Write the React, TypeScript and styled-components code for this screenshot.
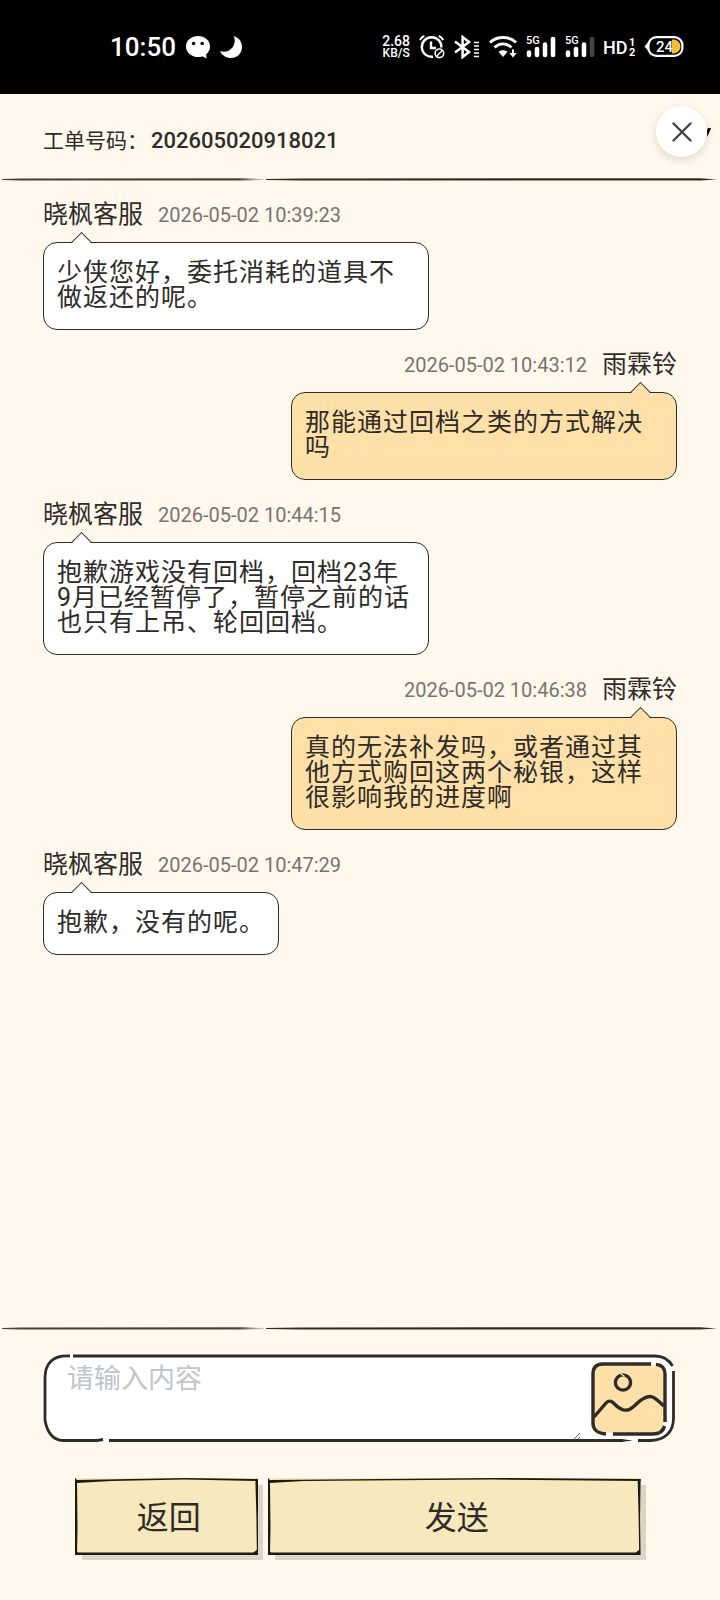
import React from 'react';
import styled, { createGlobalStyle } from 'styled-components';

const GlobalStyle = createGlobalStyle`
  * { box-sizing: border-box; }
  body {
    margin: 0;
    background: #fff8ec;
    color: #2e2c29;
    font-family: Roboto, 'Noto Sans CJK SC', sans-serif;
  }
  button, textarea { font-family: inherit; color: inherit; }
`;

const Page = styled.div`
  display: flex;
  flex-direction: column;
  min-height: 100vh;
`;

const StatusBar = styled.div`
  display: flex;
  align-items: center;
  justify-content: space-between;
  height: 94px;
  padding: 0 36px 0 110px;
  background: #000;
  color: #fff;
`;

const StatusGroup = styled.div<{ $gap: number }>`
  display: flex;
  align-items: center;
  gap: ${(p) => p.$gap}px;
  svg { display: block; }
`;

const Clock = styled.time`
  font-size: 26px;
  line-height: 24px;
  font-weight: 500;
`;

const NetSpeed = styled.div`
  display: flex;
  flex-direction: column;
  align-items: center;
  font-size: 14px;
  line-height: 12px;
  font-weight: 500;
  span + span { font-size: 12px; }
`;

const Header = styled.header`
  position: relative;
  display: flex;
  align-items: center;
  height: 84px;
  padding: 10px 43px 0;
`;

const TicketTitle = styled.h1`
  display: flex;
  gap: 3px;
  margin: 0;
  font-size: 21px;
  line-height: 30px;
  font-weight: 400;
  strong {
    font-size: 22px;
    font-weight: 500;
  }
`;

const CloseArea = styled.div`
  position: absolute;
  top: 12px;
  right: 9px;
  display: flex;
  align-items: center;
`;

const CloseButton = styled.button`
  display: grid;
  place-items: center;
  width: 51px;
  height: 51px;
  padding: 0;
  border: 0;
  border-radius: 50%;
  background: #fff;
  box-shadow: 0 3px 8px rgba(90, 70, 40, 0.18);
`;

const DividerSvg = styled.svg`
  display: block;
  flex: none;
  width: 100%;
  height: 3px;
`;

const MessageList = styled.main`
  flex: 1;
  display: flex;
  flex-direction: column;
  gap: 20px;
  padding: 19px 43px;
`;

const MessageItem = styled.article<{ $own?: boolean }>`
  display: flex;
  flex-direction: column;
  align-items: ${(p) => (p.$own ? 'flex-end' : 'flex-start')};
  gap: 12px;
`;

const Meta = styled.div<{ $own?: boolean }>`
  display: flex;
  flex-direction: ${(p) => (p.$own ? 'row-reverse' : 'row')};
  align-items: center;
  gap: 15px;
  height: 30px;
`;

const Sender = styled.span`
  font-size: 25px;
  line-height: 30px;
`;

const SentAt = styled.time`
  font-size: 20px;
  line-height: 30px;
  color: #777470;
`;

const Bubble = styled.div<{ $own?: boolean }>`
  position: relative;
  max-width: 386px;
  padding: 17px 13px 19px;
  border: 1px solid #2e2c29;
  border-radius: 14px;
  background: ${(p) => (p.$own ? '#ffe0a8' : '#fff')};
  font-size: 25px;
  line-height: 25px;
  letter-spacing: 1px;
  white-space: pre-line;

  &::before {
    content: '';
    position: absolute;
    top: -8px;
    ${(p) => (p.$own ? 'right: 28px;' : 'left: 30px;')}
    width: 14px;
    height: 14px;
    border: 1px solid #2e2c29;
    border-right: 0;
    border-bottom: 0;
    background: linear-gradient(135deg, ${(p) => (p.$own ? '#ffe0a8' : '#fff')} 52%, transparent 52%);
    transform: rotate(45deg);
  }
`;

const Composer = styled.form`
  display: flex;
  flex-direction: column;
  gap: 36px;
  padding: 24px 0 45px;
`;

const InputFrame = styled.div`
  position: relative;
  display: flex;
  gap: 10px;
  height: 88px;
  margin: 0 45px 0 43px;
  padding: 3px 8px 1px 3px;
  border-radius: 22px;
  background: #fff;
`;

const FrameSvg = styled.svg`
  position: absolute;
  inset: 0;
  width: 100%;
  height: 100%;
  pointer-events: none;
`;

const MessageInput = styled.textarea`
  flex: 1;
  min-width: 0;
  height: 84px;
  max-height: 84px;
  padding: 4px 21px;
  border: 0;
  border-radius: 18px 0 0 18px;
  outline: 0;
  background: transparent;
  font-size: 27px;
  line-height: 36px;
  resize: vertical;
  &::placeholder { color: #c0c4cc; }
`;

const ImageButton = styled.button`
  flex: none;
  align-self: center;
  width: 76px;
  height: 74px;
  padding: 0;
  border: 0;
  background: none;
  svg { display: block; }
`;

const Actions = styled.div`
  display: flex;
  gap: 10px;
  padding: 0 79px 0 75px;
`;

const SketchButton = styled.button<{ $grow: number }>`
  position: relative;
  flex: ${(p) => p.$grow} 1 0;
  height: 77px;
  padding: 2px 0 0 4px;
  border: 0;
  background: #f8e8bd;
  box-shadow: 6px 6px 0 -1px #ddd3c7;
  font-size: 32px;
  line-height: 40px;
`;

const INK = '#2e2c29';

function Divider({ id }: { id: string }) {
  return (
    <DividerSvg viewBox="0 0 720 3" preserveAspectRatio="none" aria-hidden="true">
      <defs>
        <linearGradient id={id} x1="0" x2="1">
          <stop offset="0" stopColor="#4a403c" />
          <stop offset="0.9" stopColor="#4a403c" />
          <stop offset="1" stopColor="#4a403c" stopOpacity="0.2" />
        </linearGradient>
      </defs>
      <path d="M2 1 L20 0.4 L245 0.3 L264 1 L264 2 L245 2.5 L20 2.5 L2 2 Z" fill={`url(#${id})`} />
      <path d="M266 1 L300 0.5 L700 0.2 L717 1.4 L700 2.6 L300 2.4 L266 2 Z" fill={INK} />
    </DividerSvg>
  );
}

function ChatIcon() {
  return (
    <svg width="26" height="24" viewBox="0 0 26 24" aria-hidden="true">
      <ellipse cx="13" cy="11.5" rx="12" ry="10.5" fill="#fff" />
      <path d="M15 20 L21.5 23.5 L21 17 Z" fill="#fff" />
      <circle cx="8.6" cy="8.5" r="1.8" />
      <circle cx="17.2" cy="8.5" r="1.8" />
    </svg>
  );
}

function MoonIcon() {
  return (
    <svg width="24" height="24" viewBox="0 0 24 24" aria-hidden="true">
      <path d="M13.5 1 C19 2.5 22 7 22 12 C22 18.5 17 23 11 23 C6 23 1.8 20.3 0 16 C4 17.8 9.5 16.5 12.4 12.6 C15 9 15.5 4.5 13.5 1 Z" fill="#fff" />
    </svg>
  );
}

function AlarmIcon() {
  return (
    <svg width="26" height="24" viewBox="0 0 26 24" fill="none" stroke="#fff" aria-hidden="true">
      <path d="M22.4 12.5 A9.8 9.8 0 1 0 14 21.7" strokeWidth="2.4" />
      <path d="M12 6.5 V13 H17" strokeWidth="2.4" />
      <path d="M1 5.2 C1.8 3.2 3.4 1.6 5.4 1 M19.8 1 C21.8 1.6 23.4 3.2 24.2 5.2" strokeWidth="2" />
      <circle cx="20.4" cy="18.3" r="4.3" strokeWidth="1.6" />
      <path d="M17.6 21.2 L23.2 15.4" strokeWidth="1.4" />
    </svg>
  );
}

function BluetoothIcon() {
  return (
    <svg width="26" height="24" viewBox="0 0 26 24" fill="none" stroke="#fff" aria-hidden="true">
      <path d="M1 6.5 L15 17 L8.6 22 V2 L15 7 L1 17.5" strokeWidth="2.5" />
      <path d="M20 7.6 H25 M20 11.1 H25 M20 14.6 H25 M20 18.1 H25 M20 21.6 H25" strokeWidth="1.5" />
    </svg>
  );
}

function WifiIcon() {
  return (
    <svg width="28" height="24" viewBox="0 0 28 24" fill="none" stroke="#fff" aria-hidden="true">
      <path d="M1 7.5 C8 0.8 20 0.8 27 7.5" strokeWidth="3" />
      <path d="M5.6 12.4 C10.4 7.8 17.6 7.8 22.4 12.4" strokeWidth="2.8" />
      <path d="M9.5 16.8 C12 14.6 16 14.6 18.5 16.8 L14 22 Z" fill="#fff" stroke="none" />
      <path d="M24 14.5 V20" strokeWidth="2" />
      <path d="M20.4 18 H27.6 L24 22.4 Z" fill="#fff" stroke="none" />
    </svg>
  );
}

function SignalIcon({ weak }: { weak?: boolean }) {
  return (
    <svg width="30" height="24" viewBox="0 0 30 24" aria-label="5G" role="img">
      <text x="0" y="9" fontSize="11" fontWeight="500" fill="#fff" fontFamily="Roboto, sans-serif">5G</text>
      <g stroke="#fff" strokeWidth="4.6" strokeLinecap="round">
        <path d="M3 17.5 V20 M11 14 V20 M19 9.5 V20" />
        <path d="M27 4 V20" stroke={weak ? '#444' : '#fff'} />
      </g>
    </svg>
  );
}

function HdIcon() {
  return (
    <svg width="31" height="24" viewBox="0 0 31 24" fill="#fff" aria-label="HD 1 2" role="img">
      <text x="-1" y="19" fontSize="18" fontWeight="500" fontFamily="Roboto, sans-serif">HD</text>
      <text x="25" y="11" fontSize="11" fontWeight="700" fontFamily="Roboto, sans-serif">1</text>
      <text x="25" y="21" fontSize="11" fontWeight="700" fontFamily="Roboto, sans-serif">2</text>
    </svg>
  );
}

function BatteryIcon() {
  return (
    <svg width="40" height="24" viewBox="0 0 40 24" aria-label="24%" role="img">
      <path d="M28 4.5 H30 A7 7 0 0 1 36.5 11.5 A7 7 0 0 1 30 18.5 H28 Z" fill="#f8bd3a" />
      <rect x="4.4" y="2.1" width="34" height="18.8" rx="8" fill="none" stroke="#fff" strokeWidth="2.2" />
      <path d="M4 7.5 L0.4 11.5 L4 15.5 Z" fill="#fff" />
      <text x="12" y="17" fontSize="15" fontWeight="500" fill="#fff" fontFamily="Roboto, sans-serif">24</text>
    </svg>
  );
}

function InputOutline() {
  return (
    <FrameSvg viewBox="0 0 632 88" preserveAspectRatio="none" fill="none" stroke={INK} strokeWidth="2.8" aria-hidden="true">
      <path d="M27 2 C10 1 2 9 2 24 V66 C4 78 10 86 20 86.5 H54 L60 85.5" />
      <path d="M30 2 H612 C620 2 626 6 629.5 12" />
      <path d="M630.5 17 V64 C630.5 78 622 86 608 86.5 H595" />
      <path d="M66 86.5 H580" />
      <path d="M580 85.2 L590 86.5 L580 87.8 Z" fill={INK} stroke="none" />
    </FrameSvg>
  );
}

function PictureIcon() {
  return (
    <svg width="76" height="74" viewBox="0 0 76 74" fill="none" stroke={INK} strokeWidth="3.4" aria-hidden="true">
      <rect x="2" y="2" width="72" height="70" rx="12" fill="#ffe0a8" stroke="none" />
      <path d="M61 2 H12 C5 2 2 6 2 12 V61 C2 68 6 71 15 72" />
      <path d="M65 2.4 C71 3 74 6 74 12 V60" />
      <path d="M73.5 64 C72 70 68 72 62 72 H22" />
      <path d="M60 2 H64 M15 72.5 H21 M74 60 V63" stroke="#fff" />
      <circle cx="32" cy="20.5" r="7.6" />
      <path d="M29.5 11.5 L33.5 14.5" stroke="#ffe0a8" strokeWidth="1.4" />
      <path d="M3 55 L15 41 C17 38.5 20 38.5 22.5 41 C30 49 36 50.5 42 45 C48 39.5 53 34.5 59 34.5 C64 34.5 67 39 73 44" />
    </svg>
  );
}

function ButtonOutline({ width }: { width: number }) {
  const w = width;
  return (
    <FrameSvg viewBox={`0 0 ${w} 77`} preserveAspectRatio="none" fill="#1c1a12" aria-hidden="true">
      <path d={`M0 0 L2 2 L${w * 0.6} 0 L${w} 1 V3 L${w * 0.6} 1.5 L36 3 L2 5 L2.5 50 L2 77 H0 Z`} />
      <path d={`M${w - 3} 1 H${w} L${w - 0.5} 40 L${w} 77 H0 V72 L3 74.5 H${w - 5} L${w - 1.5} 72 L${w - 2} 38 Z`} />
    </FrameSvg>
  );
}

type Message = { sender: string; time: string; text: string; own?: boolean };

const messages: Message[] = [
  { sender: '晓枫客服', time: '2026-05-02 10:39:23', text: '少侠您好，委托消耗的道具不做返还的呢。' },
  { sender: '雨霖铃', time: '2026-05-02 10:43:12', text: '那能通过回档之类的方式解决吗', own: true },
  { sender: '晓枫客服', time: '2026-05-02 10:44:15', text: '抱歉游戏没有回档，回档23年\n9月已经暂停了，暂停之前的话也只有上吊、轮回回档。' },
  { sender: '雨霖铃', time: '2026-05-02 10:46:38', text: '真的无法补发吗，或者通过其他方式购回这两个秘银，这样很影响我的进度啊', own: true },
  { sender: '晓枫客服', time: '2026-05-02 10:47:29', text: '抱歉，没有的呢。' },
];

export default function App() {
  return (
    <Page lang="zh-CN">
      <GlobalStyle />
      <StatusBar>
        <StatusGroup $gap={9}>
          <Clock>10:50</Clock>
          <ChatIcon />
          <MoonIcon />
        </StatusGroup>
        <StatusGroup $gap={9}>
          <NetSpeed>
            <span>2.68</span>
            <span>KB/S</span>
          </NetSpeed>
          <AlarmIcon />
          <BluetoothIcon />
          <WifiIcon />
          <SignalIcon />
          <SignalIcon weak />
          <HdIcon />
          <BatteryIcon />
        </StatusGroup>
      </StatusBar>

      <Header>
        <TicketTitle>
          <span>工单号码：</span>
          <strong>202605020918021</strong>
        </TicketTitle>
        <CloseArea>
          <CloseButton type="button" aria-label="关闭">
            <svg width="20" height="20" viewBox="0 0 20 20" stroke="#444" strokeWidth="2.4" strokeLinecap="round" aria-hidden="true">
              <path d="M1.5 1.5 L18.5 18.5 M18.5 1.5 L1.5 18.5" />
            </svg>
          </CloseButton>
          <svg width="4" height="14" viewBox="0 0 4 14" aria-hidden="true">
            <path d="M0 5 L1 3 L4 3 L3 6 L0 12 Z" fill="#111" />
          </svg>
        </CloseArea>
      </Header>
      <Divider id="rule-top" />

      <MessageList>
        {messages.map((m) => (
          <MessageItem key={m.time} $own={m.own}>
            <Meta $own={m.own}>
              <Sender>{m.sender}</Sender>
              <SentAt>{m.time}</SentAt>
            </Meta>
            <Bubble $own={m.own}>{m.text}</Bubble>
          </MessageItem>
        ))}
      </MessageList>

      <Divider id="rule-bottom" />
      <Composer onSubmit={(e) => e.preventDefault()}>
        <InputFrame>
          <MessageInput aria-label="消息内容" placeholder="请输入内容" />
          <ImageButton type="button" aria-label="上传图片">
            <PictureIcon />
          </ImageButton>
          <InputOutline />
        </InputFrame>
        <Actions>
          <SketchButton type="button" $grow={182}>
            <ButtonOutline width={182} />
            返回
          </SketchButton>
          <SketchButton type="submit" $grow={374}>
            <ButtonOutline width={374} />
            发送
          </SketchButton>
        </Actions>
      </Composer>
    </Page>
  );
}
